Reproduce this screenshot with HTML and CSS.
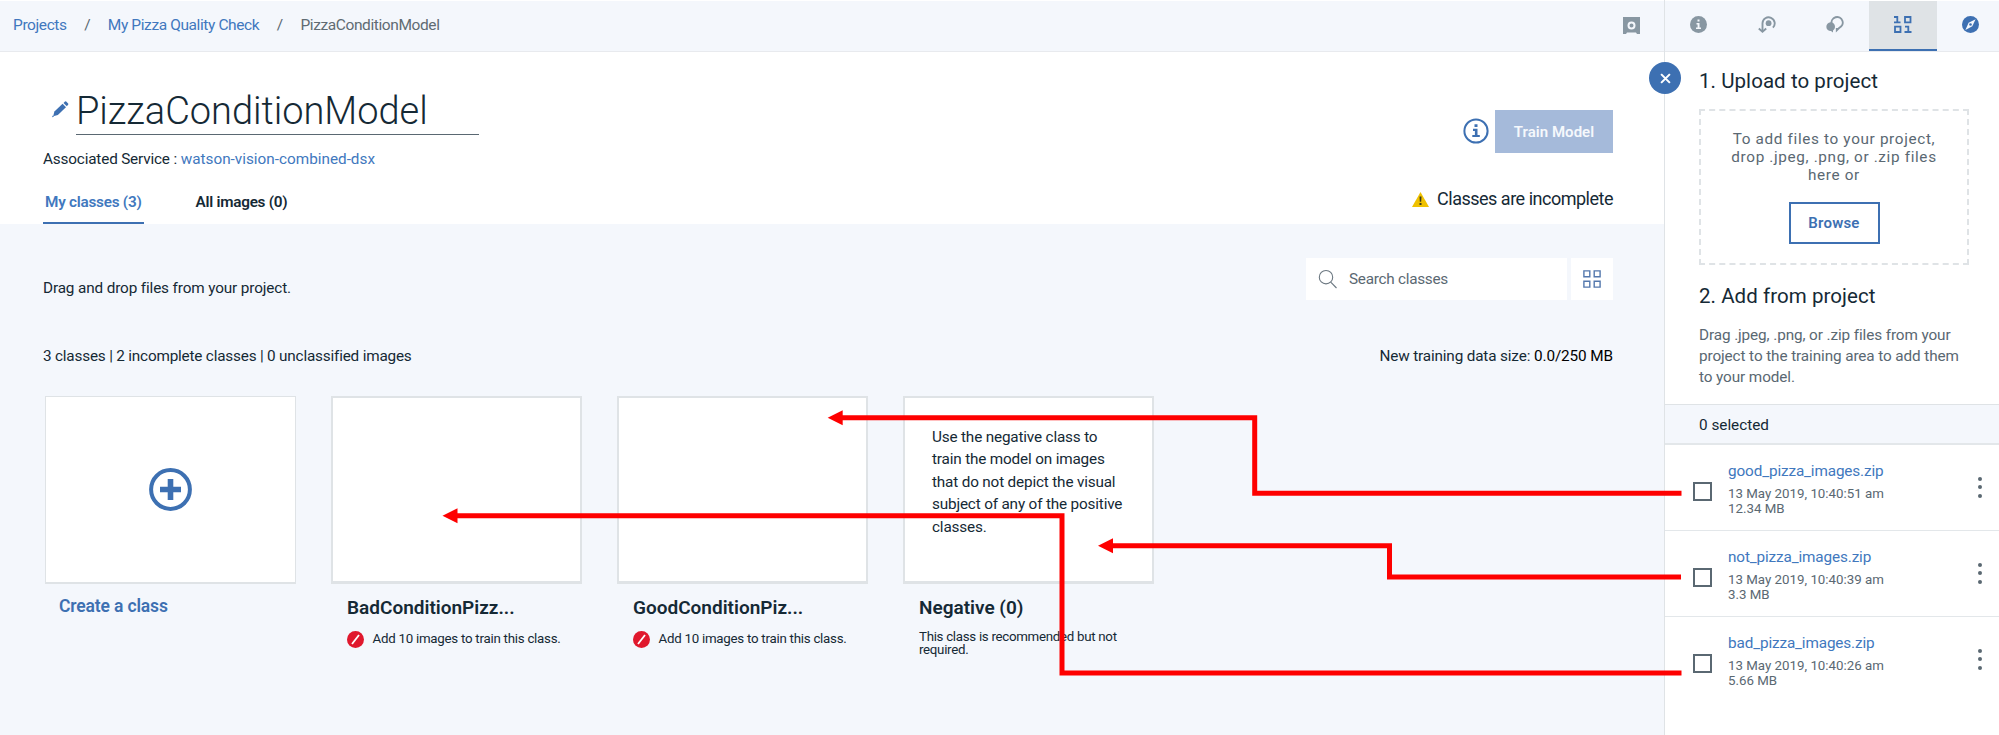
FILE: index.html
```html
<!DOCTYPE html>
<html lang="en">
<head>
<meta charset="utf-8">
<title>PizzaConditionModel</title>
<link rel="stylesheet" href="styles.css">
</head>
<body>
<div class="app">
  <main class="main">
    <header class="topbar">
      <nav class="crumbs">
        <a class="crumb-link">Projects</a><span class="slash">/</span><a class="crumb-link">My Pizza Quality Check</a><span class="slash">/</span><span class="crumb-here">PizzaConditionModel</span>
      </nav>
      <svg class="vault" width="17" height="17" viewBox="0 0 17 17">
        <path d="M0 0h17v17h-3l-1-1.500H4L3 17H0z" fill="#8897a2"/>
        <circle cx="8.500" cy="8.500" r="3" fill="#8897a2" stroke="#f4f7fc" stroke-width="2"/>
      </svg>
    </header>

    <section class="hero">
      <div class="hero-left">
        <div class="title-row">
          <svg class="pencil" width="17" height="17" viewBox="0 0 17 17" fill="#3d70b2">
            <path d="M2.400 10.600L10.600 2.800l3.400 3.400-8.200 7.800-4.600 1.300z"/>
            <path d="M11.500 2L13 .6q.6-.5 1.200 0l1.900 1.900q.5.6 0 1.200l-1.300 1.500z"/>
            <path d="M0 16.300l.7-1.700 1.300 1.200z"/>
          </svg>
          <h1 class="title">PizzaConditionModel</h1>
        </div>
        <p class="service"><span class="service-label">Associated Service :</span> <a class="link">watson-vision-combined-dsx</a></p>
        <div class="tabs">
          <div class="tab tab-active">My classes (3)</div>
          <div class="tab">All images (0)</div>
        </div>
      </div>
      <div class="hero-right">
        <div class="train-row">
          <svg class="info" width="26" height="26" viewBox="0 0 26 26">
            <circle cx="13" cy="13" r="11.600" fill="#fff" stroke="#3d70b2" stroke-width="2"/>
            <path d="M11.500 6.200h3v2.800h-3zM10 10.800h4.500v6.200h2.300v2.100H9.300V17h2.600v-4.100H10z" fill="#3d70b2"/>
          </svg>
          <button class="train">Train Model</button>
        </div>
        <div class="status">
          <svg width="17" height="15" viewBox="0 0 17 15">
            <path d="M8.500 0L17 15H0z" fill="#efc100"/>
            <path d="M7.500 4.500h2l-.3 5.300H7.800zM7.500 11h2v2h-2z" fill="#3b3a1c"/>
          </svg>
          <span>Classes are incomplete</span>
        </div>
      </div>
    </section>

    <section class="workspace">
      <div class="toolbar">
        <p class="hint">Drag and drop files from your project.</p>
        <div class="search-group">
          <div class="search">
            <svg width="20" height="20" viewBox="0 0 20 20" fill="none" stroke="#6b7780" stroke-width="1.100">
              <circle cx="8" cy="8.200" r="6.700"/><path d="M12.700 13.200L18.500 19"/>
            </svg>
            <span>Search classes</span>
          </div>
          <div class="grid-btn">
            <svg width="18" height="18" viewBox="0 0 18 18" fill="none" stroke="#5478ad" stroke-width="1.400">
              <path d="M.9.9h5.900v5.900H.9zM11.200.9h5.900v5.900h-5.900zM.9 11.200h5.900v5.900H.9zM11.200 11.200h5.900v5.900h-5.900z"/>
            </svg>
          </div>
        </div>
      </div>

      <div class="summary">
        <span class="counts">3 classes | 2 incomplete classes | 0 unclassified images</span>
        <span class="size"><span class="size-label">New training data size:</span> <span class="size-value">0.0/250 MB</span></span>
      </div>

      <div class="cards">
        <article class="card">
          <div class="box box-create">
            <svg width="43" height="43" viewBox="0 0 43 43" fill="none" stroke="#3d70b2">
              <circle cx="21.500" cy="21.500" r="19.400" stroke-width="4"/>
              <path d="M21.500 11v21M11 21.500h21" stroke-width="5.600"/>
            </svg>
          </div>
          <a class="create">Create a class</a>
        </article>
        <article class="card">
          <div class="box"></div>
          <h2 class="name">BadConditionPizz...</h2>
          <div class="need">
            <svg width="17" height="17" viewBox="0 0 17 17"><circle cx="8.500" cy="8.500" r="8.500" fill="#e0182d"/><path d="M5 13L12 4" stroke="#fff" stroke-width="1.800"/></svg>
            <span>Add 10 images to train this class.</span>
          </div>
        </article>
        <article class="card">
          <div class="box"></div>
          <h2 class="name">GoodConditionPiz...</h2>
          <div class="need">
            <svg width="17" height="17" viewBox="0 0 17 17"><circle cx="8.500" cy="8.500" r="8.500" fill="#e0182d"/><path d="M5 13L12 4" stroke="#fff" stroke-width="1.800"/></svg>
            <span>Add 10 images to train this class.</span>
          </div>
        </article>
        <article class="card">
          <div class="box box-text">Use the negative class to train the model on images that do not depict the visual subject of any of the positive classes.</div>
          <h2 class="name">Negative (0)</h2>
          <p class="note">This class is recommended but not required.</p>
        </article>
      </div>
    </section>
  </main>

  <aside class="side">
    <nav class="side-tabs">
      <div class="side-tab">
        <svg width="17" height="17" viewBox="0 0 17 17"><circle cx="8.500" cy="8.500" r="8.500" fill="#8897a2"/><path d="M7.500 3.500h2v2h-2zM6.500 7h3v4.500H11V13H6v-1.500h1.600v-3H6.500z" fill="#f4f7fc"/></svg>
      </div>
      <div class="side-tab">
        <svg width="18" height="17" viewBox="0 0 18 17" fill="none" stroke="#8897a2" stroke-width="1.900">
          <path d="M4.500 15V7.200a6.100 6.100 0 1 1 10.400 4.500"/><path d="M.8 12.500l3.700 3.200 3.700-3.200"/>
          <circle cx="10.600" cy="7.200" r="2.900" fill="#8897a2" stroke="none"/>
        </svg>
      </div>
      <div class="side-tab">
        <svg width="18" height="17" viewBox="0 0 18 17">
          <path d="M5.700 8a5.600 5.600 0 1 1 7.600 3.800l-2.500 2.500v-2.200" fill="none" stroke="#8897a2" stroke-width="1.900"/>
          <path d="M4.500 6.300a4.400 4.400 0 0 1 4.500 4.500c0 1.700-1 3-2 3.700v2l-2-1.400a4.400 4.400 0 1 1-.5-8.800z" fill="#8897a2"/>
        </svg>
      </div>
      <div class="side-tab side-tab-active">
        <svg width="18" height="17" viewBox="0 0 18 17" fill="none" stroke="#3d70b2" stroke-width="1.800">
          <path d="M0 1h3.300v5.500M0 6.400h6.500M11 1h5.500v5.400H11zM1 10.600h5.500V16H1zM11 10.600h3.300V16M10.500 16H17.500"/>
        </svg>
      </div>
      <div class="side-tab">
        <svg width="17" height="17" viewBox="0 0 17 17"><circle cx="8.500" cy="8.500" r="8.500" fill="#3d70b2"/><path d="M13.600 3.200l-3.300 7-6.900 3.700 3.200-7.200z" fill="#f4f7fc"/><circle cx="8.500" cy="8.500" r="1.300" fill="#3d70b2"/></svg>
      </div>
    </nav>

    <div class="side-body">
      <h3 class="side-title">1. Upload to project</h3>
      <div class="drop">
        <p class="drop-text">To add files to your project,<br>drop .jpeg, .png, or .zip files<br>here or</p>
        <button class="browse">Browse</button>
      </div>
      <h3 class="side-title side-title-2">2. Add from project</h3>
      <p class="side-text">Drag .jpeg, .png, or .zip files from your project to the training area to add them to your model.</p>
    </div>

    <div class="selected">0 selected</div>
    <ul class="files">
      <li class="file">
        <span class="check"></span>
        <div class="meta"><a class="fname">good_pizza_images.zip</a><div>13 May 2019, 10:40:51 am</div><div>12.34 MB</div></div>
        <span class="dots"><i></i><i></i><i></i></span>
      </li>
      <li class="file">
        <span class="check"></span>
        <div class="meta"><a class="fname">not_pizza_images.zip</a><div>13 May 2019, 10:40:39 am</div><div>3.3 MB</div></div>
        <span class="dots"><i></i><i></i><i></i></span>
      </li>
      <li class="file">
        <span class="check"></span>
        <div class="meta"><a class="fname">bad_pizza_images.zip</a><div>13 May 2019, 10:40:26 am</div><div>5.66 MB</div></div>
        <span class="dots"><i></i><i></i><i></i></span>
      </li>
    </ul>
    <div class="close">
      <svg width="11" height="11" viewBox="0 0 12 12" stroke="#fff" stroke-width="2.200"><path d="M1.200 1.200l9.600 9.600M10.800 1.200l-9.600 9.600"/></svg>
    </div>
  </aside>

  <svg class="arrows" width="1999" height="735" viewBox="0 0 1999 735">
    <g fill="none" stroke="#fe0000" stroke-width="5">
      <path d="M1681.500 493.300H1254.700V417.800H840"/>
      <path d="M1681 577H1389.500V545.800H1110"/>
      <path d="M1681.500 673H1062V515.800H455"/>
    </g>
    <g fill="#fe0000">
      <path d="M827.700 417.800l15-7.500v15z"/>
      <path d="M1098 545.800l15-7.500v15z"/>
      <path d="M442.500 515.800l15-7.500v15z"/>
    </g>
  </svg>
</div>
</body>
</html>
```

FILE: styles.css
```css
* { box-sizing: border-box; }

body {
  margin: 0;
  font: 15.3px/24px Roboto, "Liberation Sans", sans-serif;
  color: #152935;
  background: #fff;
}

h1, h2, h3, p, ul { margin: 0; padding: 0; font-weight: 400; }
svg { display: block; flex: none; }
button { font: inherit; padding: 0; }

.app {
  position: relative;
  display: flex;
  width: 1999px;
  height: 735px;
  overflow: hidden;
}

.main {
  width: 1664px;
  display: flex;
  flex-direction: column;
}

/* top bar */
.topbar {
  display: flex;
  justify-content: space-between;
  align-items: flex-start;
  height: 52px;
  padding: 0 24px 0 13px;
  background: #f4f7fc;
  border-top: 1px solid #fff;
  border-bottom: 1px solid #e8eaee;
}
.crumbs {
  display: flex;
  font-size: 15.5px;
  line-height: 49px;
  letter-spacing: -.4px;
}
.slash { margin: 0 17.3px 0 17.5px; color: #5a6872; letter-spacing: 0; }
.crumb-link, .link { color: #4178be; }
.crumb-here { color: #5f6b73; }
.vault { margin-top: 16px; }

/* hero */
.hero {
  display: flex;
  justify-content: space-between;
  height: 172px;
  padding: 0 51px 0 43px;
}
.title-row {
  display: flex;
  align-items: flex-start;
  margin: 36px 0 0 9px;
}
.pencil { margin: 13px 7px 0 0; }
.title {
  width: 403px;
  border-bottom: 1px solid #5a6872;
  font-size: 38px;
  font-weight: 300;
  line-height: 46px;
  letter-spacing: -.03px;
}
.service { margin: 12px 0 0; }
.service-label { letter-spacing: -.17px; }
.tabs {
  display: flex;
  gap: 50px;
  margin-top: 9px;
}
.tab {
  height: 44px;
  padding: 2px 2px 0;
  font-weight: 600;
  line-height: 41px;
  letter-spacing: -.25px;
  border-bottom: 2px solid transparent;
}
.tab-active { color: #4178be; border-color: #3d70b2; }

.hero-right {
  display: flex;
  flex-direction: column;
  align-items: flex-end;
  padding-top: 58px;
}
.train-row { display: flex; gap: 6px; align-items: center; }
.info { margin-bottom: 2px; }
.train {
  width: 118px;
  height: 43px;
  border: 0;
  background: #a5bada;
  color: #f5f8fc;
  font-size: 15px;
  font-weight: 600;
  letter-spacing: .03px;
}
.status {
  display: flex;
  align-items: center;
  gap: 8px;
  margin-top: 34px;
  font-size: 18px;
  letter-spacing: -.49px;
}

/* workspace */
.workspace {
  flex: 1;
  padding: 34px 51px 0 43px;
  background: #f4f7fc;
}
.toolbar {
  display: flex;
  justify-content: space-between;
  align-items: flex-end;
  height: 42px;
}
.hint { letter-spacing: -.13px; }
.search-group { display: flex; gap: 4px; height: 42px; }
.search {
  display: flex;
  align-items: center;
  gap: 11px;
  width: 261px;
  padding-left: 12px;
  background: #fff;
  color: #5a6872;
  letter-spacing: -.26px;
}
.grid-btn {
  display: grid;
  place-items: center;
  width: 42px;
  background: #fff;
}
.summary {
  display: flex;
  justify-content: space-between;
  margin-top: 44px;
}
.counts { letter-spacing: -.19px; }
.size-label { letter-spacing: -.15px; }
.size-value { color: #000; letter-spacing: -.1px; }

.cards {
  display: flex;
  gap: 35px;
  margin: 28px 0 0 2px;
}
.card { width: 251px; }
.box {
  height: 188px;
  background: #fff;
  border: 2px solid #dfe3e6;
  border-bottom-width: 3px;
}
.box-create {
  display: grid;
  place-items: center;
  border-width: 1px;
  border-bottom-width: 2px;
}
.box-text {
  padding: 28px 27px 0;
  line-height: 22.4px;
  letter-spacing: -.17px;
}
.create {
  display: block;
  margin: 10px 0 0 14px;
  color: #3d70b2;
  font-size: 17.5px;
  font-weight: 600;
  letter-spacing: -.15px;
}
.name {
  margin: 12px 0 0 16px;
  font-size: 19px;
  font-weight: 600;
  letter-spacing: 0;
}
.need {
  display: flex;
  align-items: center;
  gap: 9px;
  margin: 7px 0 0 15.500px;
  font-size: 13.3px;
  letter-spacing: -.25px;
}
.note {
  margin: 9.500px 20px 0 16px;
  font-size: 13.3px;
  line-height: 13px;
  letter-spacing: -.29px;
}

/* side panel */
.side {
  position: relative;
  width: 335px;
  border-left: 1px solid #dfe3e6;
  background: #fff;
}
.side-tabs {
  display: flex;
  height: 52px;
  overflow: hidden;
  border-top: 1px solid #fff;
  border-bottom: 1px solid #e8eaee;
  background: #f4f7fc;
}
.side-tab {
  display: flex;
  flex: none;
  justify-content: center;
  width: 67.9px;
  padding-top: 15px;
}
.side-tab-active { background: #dfe3e6; border-bottom: 2px solid #3d70b2; }

.side-body { padding: 15px 30px 0 34px; }
.side-title { font-size: 20.5px; line-height: 28px; letter-spacing: .06px; }
.side-title-2 { margin-top: 16.5px; }
.drop {
  display: flex;
  flex-direction: column;
  align-items: center;
  height: 156px;
  margin-top: 14px;
  padding-top: 19px;
  border: 2px dashed #dfe3e6;
}
.drop-text {
  color: #5a6872;
  text-align: center;
  line-height: 18.2px;
  letter-spacing: .65px;
}
.browse {
  width: 91px;
  height: 42px;
  margin-top: 17px;
  border: 2px solid #3d70b2;
  background: #fff;
  color: #3d70b2;
  font-size: 15px;
  font-weight: 600;
  letter-spacing: .2px;
}
.side-text {
  margin: 15px 0 16px;
  color: #5a6872;
  line-height: 21.2px;
  letter-spacing: -.1px;
}
.selected {
  height: 41px;
  padding-left: 34px;
  border-top: 1px solid #dfe3e6;
  border-bottom: 2px solid #e3e7ea;
  background: #f4f7fc;
  line-height: 40px;
}
.files { list-style: none; }
.file {
  display: flex;
  align-items: flex-start;
  height: 86px;
  padding: 16px 17px 0 28px;
  border-bottom: 1px solid #e3e7ea;
}
.file:last-child { border-bottom: 0; }
.check {
  width: 19px;
  height: 19px;
  margin: 21px 16px 0 0;
  border: 2px solid #5a6872;
}
.meta {
  flex: 1;
  color: #5a6872;
  font-size: 13.3px;
  line-height: 15.5px;
}
.fname {
  display: block;
  margin-bottom: 4.5px;
  color: #4178be;
  font-size: 15.3px;
  line-height: 20px;
  letter-spacing: -.13px;
}
.dots {
  display: grid;
  gap: 4.500px;
  margin-top: 15.500px;
}
.dots i { width: 4px; height: 4px; border-radius: 50%; background: #5a6872; }

.close {
  position: absolute;
  left: -16px;
  top: 62px;
  display: grid;
  place-items: center;
  width: 32px;
  height: 32px;
  border-radius: 50%;
  background: #3d70b2;
}

/* drag paths from files to classes */
.arrows { position: absolute; left: 0; top: 0; }
```
